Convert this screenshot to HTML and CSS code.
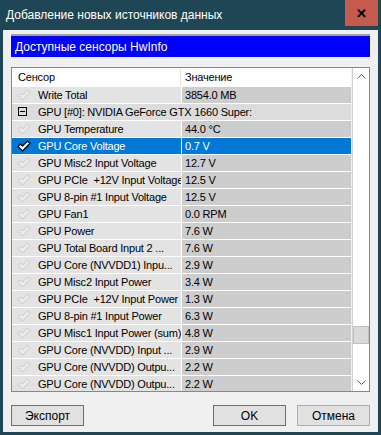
FILE: index.html
```html
<!DOCTYPE html>
<html lang="ru">
<head>
  <meta charset="UTF-8" />
  <title>Добавление новых источников данных</title>
  <link rel="stylesheet" href="styles.css">
</head>
<body>

<div class="window">
  <div class="titlebar">
    <span class="title">Добавление новых источников данных</span>
    <span class="close-btn">✕</span>
  </div>

  <div class="content">
    <div class="banner">Доступные сенсоры HwInfo</div>

    <div class="listbox">
      <div class="list">
        <div class="list-head">
          <div class="col-name">Сенсор</div>
          <div class="col-value">Значение</div>
        </div>

        <div class="row"><div class="col-name"><i class="chk"></i>Write Total</div><div class="col-value">3854.0 MB</div></div>
        <div class="row group"><div class="col-name"><i class="minus"></i>GPU [#0]: NVIDIA GeForce GTX 1660 Super:</div></div>
        <div class="row"><div class="col-name"><i class="chk"></i>GPU Temperature</div><div class="col-value">44.0 °C</div></div>
        <div class="row selected"><div class="col-name"><i class="chk"></i>GPU Core Voltage</div><div class="col-value">0.7 V</div></div>
        <div class="row"><div class="col-name"><i class="chk"></i>GPU Misc2 Input Voltage</div><div class="col-value">12.7 V</div></div>
        <div class="row"><div class="col-name"><i class="chk"></i>GPU PCIe &nbsp;+12V Input Voltage</div><div class="col-value">12.5 V</div></div>
        <div class="row"><div class="col-name"><i class="chk"></i>GPU 8-pin #1 Input Voltage</div><div class="col-value">12.5 V</div></div>
        <div class="row"><div class="col-name"><i class="chk"></i>GPU Fan1</div><div class="col-value">0.0 RPM</div></div>
        <div class="row"><div class="col-name"><i class="chk"></i>GPU Power</div><div class="col-value">7.6 W</div></div>
        <div class="row"><div class="col-name"><i class="chk"></i>GPU Total Board Input 2 ...</div><div class="col-value">7.6 W</div></div>
        <div class="row"><div class="col-name"><i class="chk"></i>GPU Core (NVVDD1) Inpu...</div><div class="col-value">2.9 W</div></div>
        <div class="row"><div class="col-name"><i class="chk"></i>GPU Misc2 Input Power</div><div class="col-value">3.4 W</div></div>
        <div class="row"><div class="col-name"><i class="chk"></i>GPU PCIe &nbsp;+12V Input Power</div><div class="col-value">1.3 W</div></div>
        <div class="row"><div class="col-name"><i class="chk"></i>GPU 8-pin #1 Input Power</div><div class="col-value">6.3 W</div></div>
        <div class="row"><div class="col-name"><i class="chk"></i>GPU Misc1 Input Power (sum)</div><div class="col-value">4.8 W</div></div>
        <div class="row"><div class="col-name"><i class="chk"></i>GPU Core (NVVDD) Input ...</div><div class="col-value">2.9 W</div></div>
        <div class="row"><div class="col-name"><i class="chk"></i>GPU Core (NVVDD) Outpu...</div><div class="col-value">2.2 W</div></div>
        <div class="row"><div class="col-name"><i class="chk"></i>GPU Core (NVVDD) Outpu...</div><div class="col-value">2.2 W</div></div>
      </div>

      <div class="scrollbar">
        <div class="arrow">
          <svg width="9" height="5" viewBox="0 0 9 5"><path d="M0.5 4.5 L4.5 0.5 L8.5 4.5" fill="none" stroke="#606060"/></svg>
        </div>
        <div class="track"><div class="thumb"></div></div>
        <div class="arrow">
          <svg width="9" height="5" viewBox="0 0 9 5"><path d="M0.5 0.5 L4.5 4.5 L8.5 0.5" fill="none" stroke="#606060"/></svg>
        </div>
      </div>
    </div>

    <div class="buttons">
      <button class="btn focused">Экспорт</button>
      <div class="spacer"></div>
      <button class="btn focused">OK</button>
      <button class="btn">Отмена</button>
    </div>
  </div>
</div>

</body>
</html>
```

FILE: styles.css
```css
body {
  margin: 0;
  font-family: "Liberation Sans", Arial, sans-serif;
  font-size: 11px;
}

.window {
  width: 381px;
  height: 435px;
  box-sizing: border-box;
  background: #1f4654;
  padding: 0 3px 3px;
  display: flex;
  flex-direction: column;
}

.titlebar {
  height: 30px;
  display: flex;
  align-items: flex-start;
  flex-shrink: 0;
}

.title {
  color: white;
  font-size: 12px;
  padding: 8px 0 0 3px;
  flex: 1;
}

.close-btn {
  width: 33px;
  height: 26px;
  background: #c55a4f;
  color: black;
  font-weight: bold;
  font-size: 13px;
  display: flex;
  align-items: center;
  justify-content: center;
}

.content {
  flex: 1;
  background: #f0f0f0;
  padding: 4px 5px 0 8px;
  display: flex;
  flex-direction: column;
}

.banner {
  height: 23px;
  box-sizing: border-box;
  border-top: 2px solid #a0a0a0;
  margin-right: 3px;
  background: #0000ff;
  color: white;
  font-size: 12px;
  padding: 4px 0 0 4px;
}

.listbox {
  margin-top: 10px;
  height: 323px;
  border: 1px solid #828790;
  background: white;
  display: flex;
  overflow: hidden;
  margin-right: 3px;
}

.list {
  flex: 1;
  overflow: hidden;
  letter-spacing: -0.2px;
}

.list-head {
  display: flex;
  height: 18px;
  align-items: center;
  color: #000;
}

.list-head .col-name {
  padding-left: 6px;
  border-right: 1px solid #e5e5e5;
  height: 18px;
  line-height: 18px;
}

.list-head .col-value {
  padding-left: 4px;
}

.col-name {
  width: 169px;
  box-sizing: border-box;
  flex-shrink: 0;
  white-space: nowrap;
  overflow: hidden;
}

.col-value {
  flex: 1;
  padding-left: 3px;
  white-space: nowrap;
}

.row {
  display: flex;
  height: 16px;
  line-height: 16px;
  border-top: 1px solid white;
}

.row .col-name {
  background: #e3e3e3;
  padding-left: 26px;
  position: relative;
}

.row .col-value {
  background: #cdcdcd;
  margin-left: 1px;
}

.row.group .col-name {
  width: auto;
  flex: 1;
  background: #dcdcdc;
}

.row.selected .col-name,
.row.selected .col-value {
  background: #0078d7;
  color: white;
}

.chk {
  position: absolute;
  left: 5px;
  top: 2px;
  width: 14px;
  height: 12px;
  background: url("data:image/svg+xml,%3Csvg xmlns='http://www.w3.org/2000/svg' width='14' height='12'%3E%3Cpath d='M1 6.5 L3.5 4 L5.5 6 L10.5 1 L13 3.5 L5.5 11 Z' fill='%23ebebeb' stroke='%23c8c8c8' stroke-linejoin='round'/%3E%3C/svg%3E") no-repeat;
}

.selected .chk {
  background: url("data:image/svg+xml,%3Csvg xmlns='http://www.w3.org/2000/svg' width='14' height='12'%3E%3Cpath d='M1 6.5 L3.5 4 L5.5 6 L10.5 1 L13 3.5 L5.5 11 Z' fill='white' stroke='black' stroke-width='1.3' stroke-linejoin='round'/%3E%3C/svg%3E") no-repeat;
}

.minus {
  position: absolute;
  left: 6px;
  top: 3px;
  width: 9px;
  height: 9px;
  border: 1px solid #000;
  box-sizing: border-box;
}

.minus::after {
  content: "";
  position: absolute;
  left: 1px;
  right: 1px;
  top: 3px;
  height: 1px;
  background: #000;
}

.scrollbar {
  width: 17px;
  display: flex;
  flex-direction: column;
  border-left: 1px solid #f0f0f0;
}

.arrow {
  height: 17px;
  display: flex;
  align-items: center;
  justify-content: center;
  border-left: 1px solid #d0d0d0;
}

.track {
  flex: 1;
  position: relative;
  border-left: 1px solid #d0d0d0;
}

.thumb {
  position: absolute;
  left: 0;
  right: 0;
  top: 241px;
  height: 16px;
  background: #dadada;
  border: 1px solid #c0c0c0;
}

.buttons {
  display: flex;
  margin-top: 13px;
  gap: 11px;
  padding-right: 3px;
}

.spacer {
  flex: 1;
}

.btn {
  width: 73px;
  height: 21px;
  background: #e1e1e1;
  border: 1px solid #adadad;
  font-family: inherit;
  font-size: 12px;
  color: black;
  padding: 0;
}

.btn.focused {
  border-color: #3b7bb5;
}
```
